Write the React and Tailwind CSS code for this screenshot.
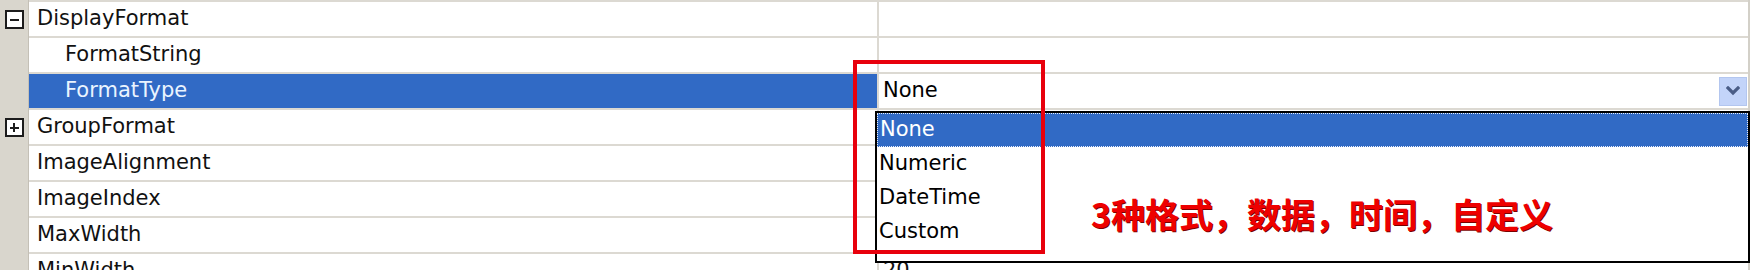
import React from "react";

const rows = [
  { name: "DisplayFormat", level: 0, toggle: "minus" },
  { name: "FormatString", level: 1 },
  { name: "FormatType", level: 1, selected: true, combo: "None" },
  { name: "GroupFormat", level: 0, toggle: "plus" },
  { name: "ImageAlignment", level: 0 },
  { name: "ImageIndex", level: 0 },
  { name: "MaxWidth", level: 0, value: "0" },
  { name: "MinWidth", level: 0, value: "20" },
];

const options = ["None", "Numeric", "DateTime", "Custom"];

function ToggleBox({ type }) {
  return (
    <div className="relative w-[19px] h-[19px] border-2 border-[#1c1c1c] bg-white">
      <div className="absolute left-[3px] top-[7px] w-[9px] h-[2px] bg-[#1c1c1c]" />
      {type === "plus" && (
        <div className="absolute left-[6.5px] top-[3px] w-[2px] h-[9px] bg-[#1c1c1c]" />
      )}
    </div>
  );
}

function Chevron() {
  return (
    <svg width="14" height="10" viewBox="0 0 14 10">
      <polyline
        points="2,2 7,7 12,2"
        fill="none"
        stroke="#4a5d86"
        strokeWidth="3.2"
        strokeLinecap="square"
      />
    </svg>
  );
}

export default function App() {
  return (
    <div className="relative w-[1754px] h-[270px] overflow-hidden bg-white font-['DejaVu_Sans',sans-serif] text-[21px] text-[#111]">
      <div className="w-[1750px] border-r-2 border-[#d3d0c8]">
        {rows.map((r, i) => (
          <div key={i} className="flex h-[36px]">
            <div className="w-[29px] shrink-0 bg-[#d9d6cd] border-r border-[#c4c0b6] flex items-center justify-center pt-[2px]">
              {r.toggle && <ToggleBox type={r.toggle} />}
            </div>
            <div className="flex flex-1 border-t-2 border-[#dcd9d2]">
              <div
                className={
                  "w-[848px] shrink-0 flex items-center " +
                  (r.level ? "pl-[36px] " : "pl-[8px] ") +
                  (r.selected ? "bg-[#316ac5] text-[#eaf4ff]" : "")
                }
              >
                {r.name}
              </div>
              <div className="flex-1 border-l-2 border-[#dcd9d2] flex items-center">
                {r.combo ? (
                  <div className="flex-1 flex items-center justify-between pl-[4px] pr-[1px]">
                    <span className="text-black">{r.combo}</span>
                    <div className="w-[28px] h-[29px] bg-[#c3d4f9] border border-[#b3c6ef] flex items-center justify-center">
                      <Chevron />
                    </div>
                  </div>
                ) : (
                  <span className="pl-[4px]">{r.value}</span>
                )}
              </div>
            </div>
          </div>
        ))}
      </div>

      {/* dropdown list */}
      <div className="absolute left-[875px] top-[111px] w-[875px] h-[152px] border-2 border-black bg-white">
        {options.map((o, i) => (
          <div
            key={o}
            className={
              "h-[34px] flex items-center pl-[2px] " +
              (i === 0
                ? "bg-[#316ac5] text-white border border-dotted border-[#e8eefb]"
                : "text-black")
            }
          >
            {o}
          </div>
        ))}
      </div>

      {/* annotation */}
      <div className="absolute left-[853px] top-[60px] w-[192px] h-[194px] border-4 border-[#e8000c]" />
      <div className="absolute left-[1091px] top-[197px] leading-none text-[34px] font-bold text-[#ee0000] font-['Noto_Sans_CJK_SC',sans-serif] [text-shadow:1px_1px_0_#7a0000]">
        3种格式，数据，时间，自定义
      </div>
    </div>
  );
}
